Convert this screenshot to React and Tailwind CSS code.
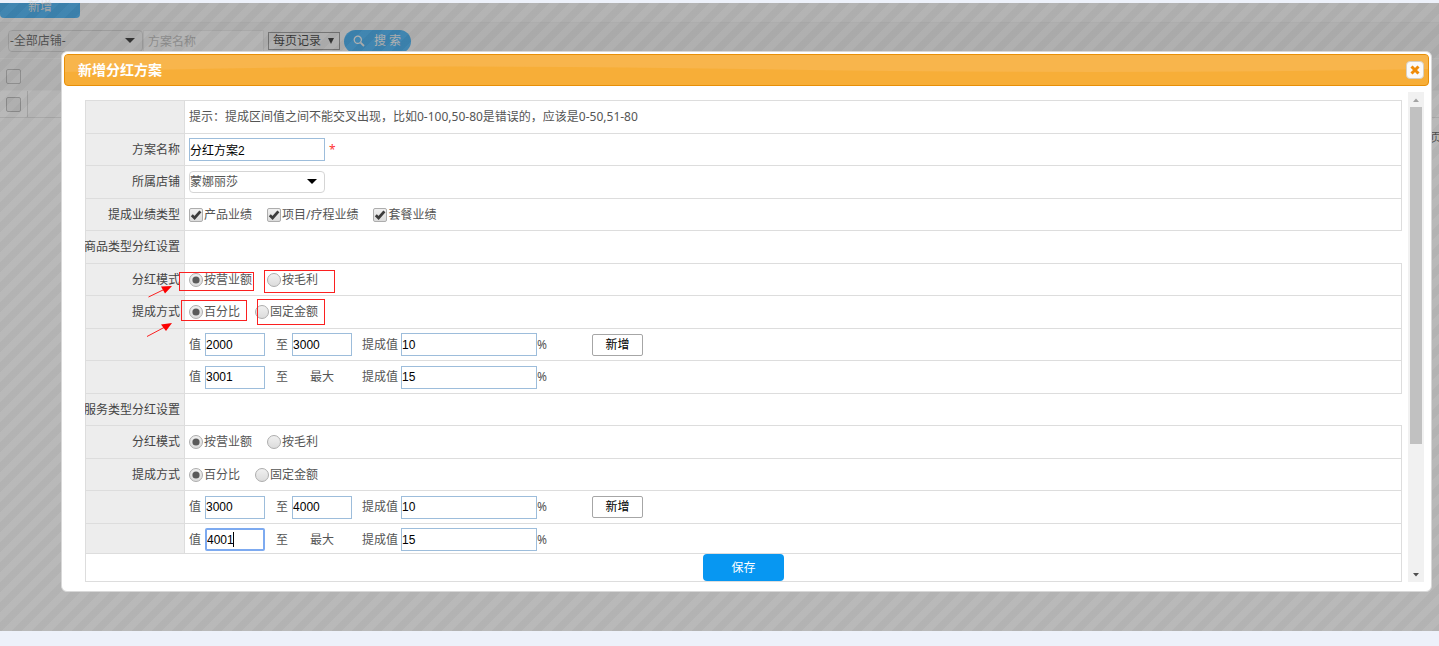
import React from 'react';

const FIELD =
  'h-[23px] border border-[#9dbddb] bg-white px-0 font-[Liberation_Sans,Noto_Sans_CJK_SC,sans-serif] text-xs text-black outline-none';

function Caret({ className }) {
  return (
    <svg viewBox="0 0 10 5" className={`pointer-events-none absolute h-[5px] w-[10px] ${className}`} aria-hidden="true">
      <path d="M0 0H10L5 5Z" fill="currentColor" />
    </svg>
  );
}

function Row({ label = '', open = false, children, ...rest }) {
  return (
    <div
      className={`flex border-t border-l border-[#dddddd] odd:h-[33px] even:h-[32px] ${open ? '' : 'border-r'}`}
      {...rest}
    >
      <div className="flex w-[99px] shrink-0 items-center justify-end border-r border-[#dddddd] bg-[#ededed] pr-1 whitespace-nowrap text-[#444444]">
        {label}
      </div>
      <div className="flex flex-1 items-center pl-1 whitespace-nowrap">{children}</div>
    </div>
  );
}

function Check({ children }) {
  return (
    <label className="mr-[15px] flex items-center gap-px">
      <span className="relative flex">
        <input
          type="checkbox"
          defaultChecked
          className="peer size-[14px] appearance-none rounded-xs border border-[#adadad] bg-linear-to-b from-[#f0f0f0] to-[#dcdcdc]"
        />
        <svg viewBox="0 0 14 14" className="pointer-events-none absolute inset-0 hidden peer-checked:block" aria-hidden="true">
          <path d="M2.8 7.2L5.6 10L11.4 3.400" fill="none" stroke="#3c3c3c" strokeWidth="2.8" />
        </svg>
      </span>
      {children}
    </label>
  );
}

function Radio({ name, checked = false, children }) {
  return (
    <label className="mr-[15px] flex items-center gap-px">
      <span className="relative flex">
        <input
          type="radio"
          name={name}
          defaultChecked={checked}
          className="peer size-[14px] appearance-none rounded-full border border-[#adadad] bg-linear-to-b from-[#f0f0f0] to-[#dcdcdc]"
        />
        <svg viewBox="0 0 14 14" className="pointer-events-none absolute inset-0 hidden peer-checked:block" aria-hidden="true">
          <circle cx="7" cy="7" r="3.6" fill="#5a5a5a" />
        </svg>
      </span>
      {children}
    </label>
  );
}

function RangeRow({ from, to, rate, focused = false }) {
  return (
    <Row>
      <label className="relative flex items-center gap-1">
        值
        <input
          defaultValue={from}
          className={
            focused
              ? 'h-[23px] w-[60px] rounded-xs border-2 border-[#7daaf0] bg-white font-[Liberation_Sans,sans-serif] text-xs text-black outline-none'
              : `${FIELD} w-[60px]`
          }
        />
        {focused && <span className="absolute top-1 left-[44px] h-[15px] w-px bg-black" />}
      </label>
      <label className="ml-[11px] flex items-center gap-1">
        至
        {to ? (
          <input defaultValue={to} className={`${FIELD} w-[60px]`} />
        ) : (
          <span className="w-[60px] text-center">最大</span>
        )}
      </label>
      <label className="ml-[10px] flex items-center gap-[3px]">
        提成值
        <input defaultValue={rate} className={`${FIELD} w-[136px]`} />
      </label>
      <span className="w-[55px]">%</span>
      {to && (
        <button className="h-[22px] w-[51px] rounded-xs border border-[#a6a6a6] bg-white text-black">新增</button>
      )}
    </Row>
  );
}

function Settings({ title, id, rows }) {
  return (
    <>
      <Row label={title} open />
      <Row label="分红模式">
        <Radio name={`${id}-mode`} checked>按营业额</Radio>
        <Radio name={`${id}-mode`}>按毛利</Radio>
      </Row>
      <Row label="提成方式">
        <Radio name={`${id}-way`} checked>百分比</Radio>
        <Radio name={`${id}-way`}>固定金额</Radio>
      </Row>
      {rows.map((r) => (
        <RangeRow key={r.from} {...r} />
      ))}
    </>
  );
}

function Page() {
  return (
    <div className="flex flex-1 flex-col bg-white text-xs text-[#333333]">
      <div className="h-5 border-b border-[#e8e8e8] bg-[#f6f6f6]">
        <button className="flex h-[15px] w-20 items-end justify-center rounded-b bg-[#0f9af0] pb-[5px] leading-none text-[#dddddd]">
          新增
        </button>
      </div>
      <div className="flex h-9 items-center border-b border-[#f8f8f8] bg-[#eeeeee] pt-px pl-2">
        <span className="relative flex">
          <select aria-label="店铺" className="h-[22px] w-[135px] appearance-none rounded border border-[#c8c8c8] bg-transparent pl-px">
            <option>-全部店铺-</option>
          </select>
          <Caret className="top-2 right-2 text-black" />
        </span>
        <input
          aria-label="方案名称"
          placeholder="方案名称"
          className="h-[22px] w-[121px] border border-[#e0e0e0] bg-[#f8f8f8] pl-1 placeholder:text-[#aaaaaa]"
        />
        <span className="relative ml-1 flex">
          <select aria-label="每页记录" className="h-[18px] w-[72px] appearance-none border border-[#777777] bg-transparent pl-1 text-black">
            <option>每页记录</option>
          </select>
          <svg viewBox="0 0 6 6" className="pointer-events-none absolute top-[6px] right-[6px] size-[6px]" aria-hidden="true">
            <path d="M0 0H6L3 6Z" fill="#000" />
          </svg>
        </span>
        <button className="ml-1 flex h-[23px] w-[67px] items-center gap-[9px] rounded-full bg-[#0f9af0] pl-[9px] whitespace-pre text-[#eeeeee]">
          <svg viewBox="0 0 12 12" className="size-3" aria-hidden="true">
            <circle cx="4.8" cy="4.8" r="3.6" fill="none" stroke="currentColor" strokeWidth="1.2" />
            <path d="M7.6 7.6L11 11" stroke="currentColor" strokeWidth="1.8" />
          </svg>
          搜 索
        </button>
      </div>
      <div className="flex h-8 items-center border-b border-[#f8f8f8] bg-[#f0f0f0] pl-[6px]">
        <input type="checkbox" aria-label="全选" className="mt-1 size-[15px] appearance-none rounded-xs border border-[#aaaaaa]" />
      </div>
      <div className="flex h-[27px] border-b border-[#e0e0e0]">
        <div className="flex w-7 items-center border-r border-[#d0d0d0] pl-[6px]">
          <input type="checkbox" aria-label="选择" className="size-[15px] appearance-none rounded-xs border border-[#aaaaaa] bg-[#eeeeee]" />
        </div>
      </div>
      <div className="flex justify-end overflow-hidden pt-[12px]">
        <span className="w-[9px] overflow-hidden whitespace-nowrap">页</span>
      </div>
    </div>
  );
}

function Marks() {
  return (
    <svg
      viewBox="140 264 200 80"
      className="pointer-events-none absolute top-[212px] left-[78px] h-[80px] w-[200px]"
      aria-hidden="true"
    >
      <g fill="none" stroke="#fb2020" strokeWidth="1">
        <rect x="179.5" y="272.5" width="74" height="18" />
        <rect x="264.5" y="270.5" width="70" height="22" />
        <rect x="181.5" y="300.5" width="65" height="20" />
        <rect x="257.5" y="299.5" width="67" height="25" />
        <path d="M148.5 297L164 289.5M147 336.5L164 327.500" />
      </g>
      <path d="M172 286L161 286.500L165 293.500Z M172 323L161 324.500L166 331Z" fill="#fb0000" />
    </svg>
  );
}

export default function App() {
  return (
    <div className="flex min-h-screen flex-col bg-[#edf1fa] pt-[3px] pb-[15px] font-[Noto_Sans,Noto_Sans_CJK_SC,sans-serif]">
      <main className="relative flex flex-1 flex-col">
        <Page />
        <div className="absolute inset-0 bg-[linear-gradient(135deg,#6666667f_25%,#7272727f_25%,#7272727f_50%,#6666667f_50%,#6666667f_75%,#7272727f_75%)] bg-size-[20px_20px]" />

        <div
          role="dialog"
          aria-labelledby="dialog-title"
          className="absolute top-12 right-[7px] left-[61px] rounded-md border border-[#d8d8d8] bg-white p-[2px] text-xs text-[#555555]"
        >
          <header className="relative flex h-8 items-center justify-between overflow-hidden rounded border border-[#e78f08] bg-[#f7ae38] pr-1 pl-[13px]">
            <svg viewBox="0 0 1364 30" preserveAspectRatio="none" className="absolute inset-0 size-full" aria-hidden="true">
              <path d="M0 0H1364V14Q1040 20 680 14T0 17Z" fill="#f8b54c" />
            </svg>
            <h2 id="dialog-title" className="relative text-sm font-bold text-white">新增分红方案</h2>
            <button aria-label="关闭" className="relative flex size-[18px] items-center justify-center rounded border border-[#d6d0c4] bg-[#fafafa]">
              <svg viewBox="0 0 10 10" className="size-[10px]" aria-hidden="true">
                <path d="M1.500 1.500L8.500 8.500M8.500 1.500L1.500 8.500" stroke="#ef8c08" strokeWidth="3" />
              </svg>
            </button>
          </header>

          <div className="relative flex pt-[6px] pr-[5px] pb-[7px] pl-[21px]">
            <form className="flex flex-1 flex-col pt-2" onSubmit={(e) => e.preventDefault()}>
              <div className="h-[453px] overflow-hidden">
                <Row>提示：提成区间值之间不能交叉出现，比如0-100,50-80是错误的，应该是0-50,51-80</Row>
                <Row label={<label htmlFor="plan">方案名称</label>}>
                  <input id="plan" defaultValue="分红方案2" className={`${FIELD} w-[136px]`} />
                  <span className="ml-1 text-[#ff3333]">*</span>
                </Row>
                <Row label={<label htmlFor="shop">所属店铺</label>}>
                  <span className="relative flex">
                    <select id="shop" className="h-[22px] w-[136px] appearance-none rounded border border-[#d5d5d5] bg-white">
                      <option>蒙娜丽莎</option>
                    </select>
                    <Caret className="top-2 right-2 text-black" />
                  </span>
                </Row>
                <Row label="提成业绩类型">
                  <Check>产品业绩</Check>
                  <Check>项目/疗程业绩</Check>
                  <Check>套餐业绩</Check>
                </Row>
                <Settings
                  title="商品类型分红设置"
                  id="goods"
                  rows={[
                    { from: '2000', to: '3000', rate: '10' },
                    { from: '3001', rate: '15' },
                  ]}
                />
                <Settings
                  title="服务类型分红设置"
                  id="service"
                  rows={[
                    { from: '3000', to: '4000', rate: '10' },
                    { from: '4001', rate: '15', focused: true },
                  ]}
                />
              </div>
              <div className="flex justify-center border border-[#dddddd]">
                <button className="h-[27px] w-[81px] rounded bg-[#0797f2] text-white">保存</button>
              </div>
            </form>
            <div className="ml-[6px] flex w-4 flex-col items-center bg-[#f1f1f1]">
              <svg viewBox="0 0 16 15" className="h-[15px] w-4" aria-hidden="true">
                <path d="M5 10H11L8 6.500Z" fill="#a3a3a3" />
              </svg>
              <div className="h-[337px] w-3 bg-[#c1c1c1]" />
              <svg viewBox="0 0 16 15" className="mt-auto h-[15px] w-4" aria-hidden="true">
                <path d="M5 6H11L8 9.500Z" fill="#505050" />
              </svg>
            </div>
          </div>
          <Marks />
        </div>
      </main>
    </div>
  );
}
